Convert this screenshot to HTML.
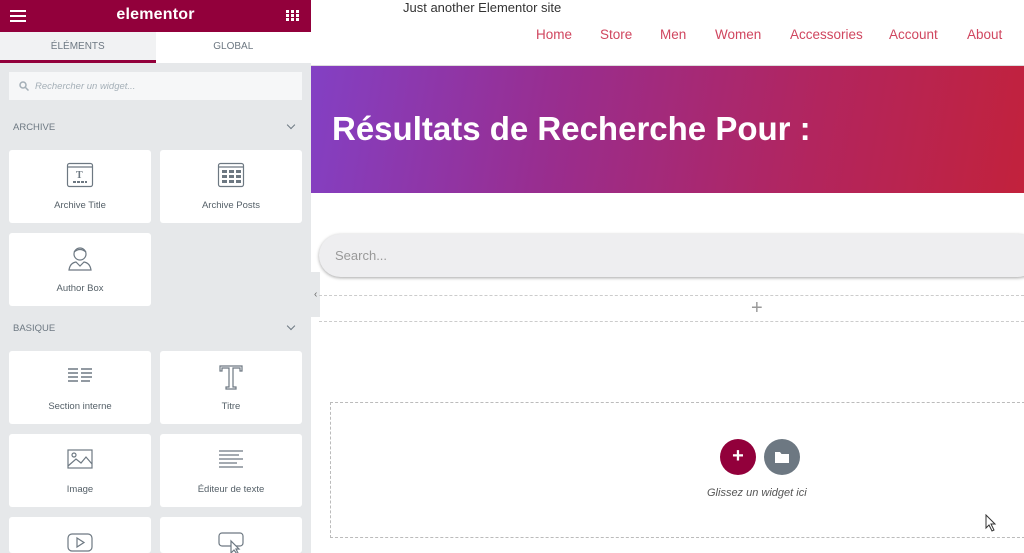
<!DOCTYPE html>
<html><head><meta charset="utf-8"><style>
*{margin:0;padding:0;box-sizing:border-box}
html,body{width:1024px;height:553px;overflow:hidden}
body{font-family:"Liberation Sans",sans-serif;background:#fff;position:relative}
#panel{position:absolute;left:0;top:0;width:311px;height:553px;background:#e6e8ea;overflow:hidden}
#hdr{height:32px;background:#92003b;position:relative;color:#fff}
#hdr .logo{position:absolute;left:0;right:0;top:6px;text-align:center;font-weight:bold;font-size:16px;letter-spacing:.2px}
#tabs{height:31px;display:flex;background:#fff}
#tabs div{flex:1;text-align:center;font-size:10px;color:#6d7882;line-height:29px}
#tabs .a{background:#f1f2f3;border-bottom:3px solid #92003b}
.srch{position:absolute;left:9px;top:72px;width:293px;height:28px;background:#f6f7f8;font-size:9.5px;font-style:italic;color:#a4afb7;padding:9px 0 0 26px}
.sec{position:absolute;left:13px;font-size:9.5px;color:#6d7882}
.chev{position:absolute;left:288px;width:6px;height:6px;border-right:1.3px solid #6d7882;border-bottom:1.3px solid #6d7882;transform:rotate(45deg)}
.card{position:absolute;width:142px;height:73px;background:#fff;border-radius:3px;text-align:center}
.card span{position:absolute;left:0;right:0;top:50px;font-size:9.5px;color:#556068}
.card svg{position:absolute;left:57px;top:12px}
#canvas{position:absolute;left:311px;top:0;width:713px;height:553px;background:#fff;overflow:hidden}
.nav{position:absolute;top:27px;font-size:13.5px;color:#d0465f}
</style></head><body>
<div id="panel">
 <div id="hdr">
  <svg style="position:absolute;left:10px;top:10px" width="16" height="12"><rect y="0" width="16" height="2" fill="#fff"/><rect y="5" width="16" height="2" fill="#fff"/><rect y="10" width="16" height="2" fill="#fff"/></svg>
  <div class="logo">elementor</div>
  <svg style="position:absolute;left:286px;top:10px" width="13" height="11" fill="#fff"><rect x="0" y="0" width="3" height="3"/><rect x="5" y="0" width="3" height="3"/><rect x="10" y="0" width="3" height="3"/><rect x="0" y="4" width="3" height="3"/><rect x="5" y="4" width="3" height="3"/><rect x="10" y="4" width="3" height="3"/><rect x="0" y="8" width="3" height="3"/><rect x="5" y="8" width="3" height="3"/><rect x="10" y="8" width="3" height="3"/></svg>
 </div>
 <div id="tabs"><div class="a">ÉLÉMENTS</div><div>GLOBAL</div></div>
 <div class="srch"><svg style="position:absolute;left:10px;top:9px" width="10" height="10"><circle cx="4" cy="4" r="3" stroke="#a4afb7" stroke-width="1.5" fill="none"/><line x1="6.5" y1="6.5" x2="9.5" y2="9.5" stroke="#a4afb7" stroke-width="1.5"/></svg>Rechercher un widget...</div>
 <div class="sec" style="top:122px">ARCHIVE</div><div class="chev" style="top:122px"></div>
 <div class="card" style="left:9px;top:150px"><svg width="28" height="26" fill="none" stroke="#6d7882" stroke-width="1.2"><rect x="1.5" y="1.5" width="25" height="23" rx="2"/><line x1="1.5" y1="5" x2="26.5" y2="5"/><text x="10" y="16" font-size="10" fill="#6d7882" stroke="none" font-family="Liberation Serif" font-weight="bold">T</text><line x1="7" y1="20" x2="21" y2="20" stroke-width="2" stroke-dasharray="3 1"/></svg><span>Archive Title</span></div>
 <div class="card" style="left:160px;top:150px"><svg width="28" height="26" fill="none" stroke="#6d7882" stroke-width="1.2"><rect x="1.5" y="1.5" width="25" height="23" rx="2"/><line x1="1.5" y1="5" x2="26.5" y2="5"/><g fill="#6d7882" stroke="none"><rect x="5" y="8" width="5" height="3"/><rect x="12" y="8" width="5" height="3"/><rect x="19" y="8" width="5" height="3"/><rect x="5" y="13" width="5" height="3"/><rect x="12" y="13" width="5" height="3"/><rect x="19" y="13" width="5" height="3"/><rect x="5" y="18" width="5" height="3"/><rect x="12" y="18" width="5" height="3"/><rect x="19" y="18" width="5" height="3"/></g></svg><span>Archive Posts</span></div>
 <div class="card" style="left:9px;top:233px"><svg width="28" height="26" fill="none" stroke="#6d7882" stroke-width="1.2"><circle cx="14" cy="9" r="6"/><path d="M8 7 Q14 2 20 7"/><path d="M3 25 Q4 18 10 17 L14 21 L18 17 Q24 18 25 25 Z"/></svg><span>Author Box</span></div>
 <div class="sec" style="top:323px">BASIQUE</div><div class="chev" style="top:323px"></div>
 <div class="card" style="left:9px;top:351px"><svg width="28" height="26" stroke="#6d7882" stroke-width="1.5"><g><line x1="2" y1="6" x2="12" y2="6"/><line x1="2" y1="10" x2="12" y2="10"/><line x1="2" y1="14" x2="12" y2="14"/><line x1="2" y1="18" x2="12" y2="18"/><line x1="15" y1="6" x2="26" y2="6"/><line x1="15" y1="10" x2="26" y2="10"/><line x1="15" y1="14" x2="26" y2="14"/><line x1="15" y1="18" x2="24" y2="18"/></g></svg><span>Section interne</span></div>
 <div class="card" style="left:160px;top:351px"><svg width="28" height="28" fill="none" stroke="#6d7882" stroke-width="1.2"><path d="M3 3 H25 V8 H23 V5 H16 V24 H19 V26 H9 V24 H12 V5 H5 V8 H3 Z"/></svg><span>Titre</span></div>
 <div class="card" style="left:9px;top:434px"><svg width="28" height="26" fill="none" stroke="#6d7882" stroke-width="1.2"><rect x="2" y="4" width="24" height="18"/><circle cx="8" cy="9" r="2"/><path d="M2 20 L10 13 L15 17 L20 11 L26 18"/></svg><span>Image</span></div>
 <div class="card" style="left:160px;top:434px"><svg width="28" height="26" stroke="#6d7882" stroke-width="1.2"><line x1="2" y1="5" x2="26" y2="5"/><line x1="2" y1="9" x2="22" y2="9"/><line x1="2" y1="13" x2="26" y2="13"/><line x1="2" y1="17" x2="20" y2="17"/><line x1="2" y1="21" x2="26" y2="21"/></svg><span>Éditeur de texte</span></div>
 <div class="card" style="left:9px;top:517px;height:36px"><svg width="28" height="26" fill="none" stroke="#6d7882" stroke-width="1.2"><rect x="2" y="5" width="24" height="17" rx="4"/><path d="M11 9 L18 13.5 L11 18 Z"/></svg></div>
 <div class="card" style="left:160px;top:517px;height:36px"><svg width="28" height="24" fill="none" stroke="#6d7882" stroke-width="1.2"><rect x="2" y="4" width="24" height="13" rx="3"/><path d="M14 12 L14 24 L17 21 L20 25 L21 24 L19 20 L22 20 Z" fill="#fff"/></svg></div>
</div>
<div id="canvas">
 <div style="position:absolute;left:92px;top:0;font-size:13px;color:#333">Just another Elementor site</div>
 <div class="nav" style="left:225px">Home</div><div class="nav" style="left:289px">Store</div><div class="nav" style="left:349px">Men</div><div class="nav" style="left:404px">Women</div><div class="nav" style="left:479px">Accessories</div><div class="nav" style="left:578px">Account</div><div class="nav" style="left:656px">About</div>
 <div style="position:absolute;left:0;top:65px;width:713px;height:1px;background:#ddd"></div>
 <div style="position:absolute;left:0;top:66px;width:713px;height:127px;background:linear-gradient(100deg,#8340c4 0%,#992d8e 35%,#b2255e 70%,#c2223c 100%)">
  <div style="position:absolute;left:21px;top:44px;font-size:33px;font-weight:bold;color:#fff">Résultats de Recherche Pour :</div>
 </div>
 <div style="position:absolute;left:8px;top:234px;width:720px;height:43px;border-radius:22px;background:#eeeef0;box-shadow:0 1px 3px rgba(0,0,0,.35)"><span style="position:absolute;left:16px;top:14px;font-size:13px;color:#999">Search...</span></div>
 <div style="position:absolute;left:0;top:272px;width:9px;height:45px;background:#e6e8ea"></div>
 <div style="position:absolute;left:3px;top:289px;font-size:10px;color:#666">‹</div>
 <div style="position:absolute;left:8px;top:295px;width:710px;height:27px;border-top:1px dashed #ccc;border-bottom:1px dashed #ccc"></div>
 <div style="position:absolute;left:440px;top:297px;font-size:20px;color:#999">+</div>
 <div style="position:absolute;left:19px;top:402px;width:700px;height:136px;border:1px dashed #bbb"></div>
 <div style="position:absolute;left:409px;top:439px;width:36px;height:36px;border-radius:50%;background:#92003b;color:#fff;text-align:center;font-size:20px;line-height:35px;font-weight:bold">+</div>
 <div style="position:absolute;left:453px;top:439px;width:36px;height:36px;border-radius:50%;background:#6d7882"><svg style="position:absolute;left:11px;top:12px" width="14" height="12"><path d="M0 1 H5 L6.5 3 H14 V12 H0 Z" fill="#fff"/></svg></div>
 <span style="position:absolute;left:396px;top:487px;font-size:11px;font-style:italic;color:#555">Glissez un widget ici</span>
 <svg style="position:absolute;left:674px;top:514px" width="12" height="18"><path d="M1 1 L1 14 L4 11 L7 17 L9 16 L6 10 L10 10 Z" fill="#fff" stroke="#333"/></svg>
</div>
</body></html>
